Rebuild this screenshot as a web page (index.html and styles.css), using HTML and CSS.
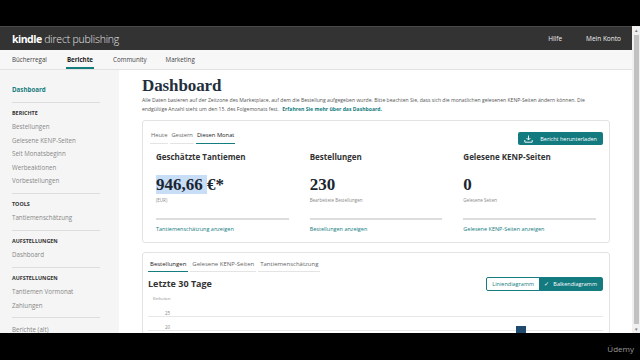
FILE: index.html
```html
<!DOCTYPE html>
<html>
<head>
    <title>Dashboard - Kindle Direct Publishing</title>
    <link rel="stylesheet" href="styles.css">
</head>
<body>
    <div class="bar-top"></div>

    <div class="frame">
        <div class="window">
            <div class="header">
                <div class="logo"><b>kindle</b> direct publishing</div>
                <div class="header-links">
                    <span>Hilfe</span>
                    <span>Mein Konto</span>
                </div>
            </div>

            <div class="nav">
                <span>Bücherregal</span>
                <span class="active">Berichte</span>
                <span>Community</span>
                <span>Marketing</span>
            </div>

            <div class="content">
                <div class="sidebar">
                    <div class="side-link current">Dashboard</div>
                    <div class="divider"></div>
                    <div class="side-title">BERICHTE</div>
                    <div class="side-link">Bestellungen</div>
                    <div class="side-link">Gelesene KENP-Seiten</div>
                    <div class="side-link">Seit Monatsbeginn</div>
                    <div class="side-link">Werbeaktionen</div>
                    <div class="side-link">Vorbestellungen</div>
                    <div class="divider"></div>
                    <div class="side-title">TOOLS</div>
                    <div class="side-link">Tantiemenschätzung</div>
                    <div class="divider"></div>
                    <div class="side-title">AUFSTELLUNGEN</div>
                    <div class="side-link">Dashboard</div>
                    <div class="divider"></div>
                    <div class="side-title">AUFSTELLUNGEN</div>
                    <div class="side-link">Tantiemen Vormonat</div>
                    <div class="side-link">Zahlungen</div>
                    <div class="divider"></div>
                    <div class="side-link">Berichte (alt)</div>
                </div>

                <div class="main">
                    <h1>Dashboard</h1>
                    <p class="intro">Alle Daten basieren auf der Zeitzone des Marketplace, auf dem die Bestellung aufgegeben wurde. Bitte beachten Sie, dass sich die monatlichen gelesenen KENP-Seiten ändern können. Die endgültige Anzahl steht um den 15. des Folgemonats fest. <a>Erfahren Sie mehr über das Dashboard.</a></p>

                    <div class="card">
                        <div class="card-top">
                            <div class="tabs">
                                <span>Heute</span>
                                <span>Gestern</span>
                                <span class="on">Diesen Monat</span>
                            </div>
                            <div class="download">
                                <svg width="9" height="8" viewBox="0 0 9 8">
                                    <path d="M4.5 0.5v4.5M2.5 3l2 2 2-2M0.8 5v2.2h7.4V5" fill="none" stroke="#fff" stroke-width="0.9"/>
                                </svg>
                                Bericht herunterladen
                            </div>
                        </div>
                        <div class="stats">
                            <div class="stat">
                                <div class="stat-title">Geschätzte Tantiemen</div>
                                <div class="stat-value"><span class="sel">946,66 </span>€*</div>
                                <div class="stat-note">(EUR)</div>
                                <div class="stat-line"></div>
                                <a class="stat-link">Tantiemenschätzung anzeigen</a>
                            </div>
                            <div class="stat">
                                <div class="stat-title">Bestellungen</div>
                                <div class="stat-value">230</div>
                                <div class="stat-note">Bearbeitete Bestellungen</div>
                                <div class="stat-line"></div>
                                <a class="stat-link">Bestellungen anzeigen</a>
                            </div>
                            <div class="stat">
                                <div class="stat-title">Gelesene KENP-Seiten</div>
                                <div class="stat-value">0</div>
                                <div class="stat-note">Gelesene Seiten</div>
                                <div class="stat-line"></div>
                                <a class="stat-link">Gelesene KENP-Seiten anzeigen</a>
                            </div>
                        </div>
                    </div>

                    <div class="card chart-card">
                        <div class="tabs tabs-big">
                            <span class="on">Bestellungen</span>
                            <span>Gelesene KENP-Seiten</span>
                            <span>Tantiemenschätzung</span>
                        </div>
                        <div class="chart-head">
                            <div class="chart-title">Letzte 30 Tage</div>
                            <div class="toggle">
                                <span>Liniendiagramm</span>
                                <span class="on">✓&nbsp;&nbsp;&nbsp;Balkendiagramm</span>
                            </div>
                        </div>
                        <div class="chart">
                            <div class="unit">Einheiten</div>
                            <div class="grid-row"><span>25</span></div>
                            <div class="grid-row"><span>20</span></div>
                            <div class="bar"></div>
                        </div>
                    </div>
                </div>
            </div>
        </div>
        <div class="scrollbar">
            <div class="arrow">▴</div>
            <div class="thumb"></div>
            <div class="arrow">▾</div>
        </div>
    </div>

    <div class="bar-bottom">Üdemy</div>
</body>
</html>
```

FILE: styles.css
```css
body {
    margin: 0;
    background: #000;
    font-family: "Open Sans", "Noto Sans", sans-serif;
    width: 640px;
    height: 360px;
    overflow: hidden;
}
a {
    color: #157c80;
}
.bar-top {
    height: 26px;
}
.frame {
    height: 307px;
    display: flex;
    overflow: hidden;
}
.window {
    width: 632px;
    display: flex;
    flex-direction: column;
    background: #fff;
}
.scrollbar {
    width: 8px;
    background: #f0f0f0;
    display: flex;
    flex-direction: column;
    align-items: center;
}
.scrollbar .arrow {
    font-size: 5px;
    line-height: 8px;
    color: #777;
}
.scrollbar .thumb {
    flex: 1;
    width: 5px;
    background: #c1c1c1;
    margin: 1px 0;
}
.bar-bottom {
    height: 27px;
    color: #9a9a9a;
    font-size: 8px;
    text-align: right;
    padding-right: 6px;
    line-height: 32px;
}

/* kopfzeile */
.header {
    height: 23px;
    background: #333;
    display: flex;
    align-items: center;
    justify-content: space-between;
    padding: 0 11px 0 12px;
    border-top: 1px solid #4a4a4a;
}
.logo {
    color: #e4e4e4;
    font-size: 10.5px;
    letter-spacing: -0.2px;
    font-weight: 300;
}
.logo b {
    color: #fff;
    font-weight: 700;
    letter-spacing: -0.5px;
}
.header-links {
    display: flex;
    gap: 24px;
    color: #eee;
    font-size: 6.5px;
}
.nav {
    height: 19px;
    background: #f7f7f7;
    border-bottom: 1px solid #e2e2e2;
    display: flex;
    gap: 19px;
    padding-left: 12px;
    font-size: 6.2px;
    color: #444;
}
.nav span {
    line-height: 19px;
    border-bottom: 2px solid transparent;
    height: 17px;
}
.nav .active {
    font-weight: 700;
    color: #222;
    border-bottom-color: #157c80;
    padding: 0 1px;
}

.content {
    flex: 1;
    display: flex;
    overflow: hidden;
}

/* seitenleiste */
.sidebar {
    width: 107px;
    background: #f5f5f5;
    padding: 13px 0 0 12px;
    flex-shrink: 0;
}
.side-link {
    font-size: 6.2px;
    color: #888;
    line-height: 13.5px;
}
.side-link.current {
    color: #157c80;
    font-weight: 700;
}
.side-title {
    font-size: 5.4px;
    font-weight: 700;
    color: #333;
    line-height: 11px;
    margin-bottom: 1.5px;
}
.divider {
    width: 88px;
    height: 1px;
    background: #ddd;
    margin: 5px 0 5px;
}

/* hauptbereich */
.main {
    flex: 1;
    padding: 6px 22px 0 23px;
}
h1 {
    font-family: "Liberation Serif", "DejaVu Serif", serif;
    font-size: 17px;
    font-weight: 700;
    color: #232f3e;
    margin: 0;
    line-height: 20px;
    letter-spacing: -0.1px;
}
.intro {
    font-size: 5.1px;
    color: #555;
    line-height: 9.2px;
    margin: 0 0 6px;
}
.intro a {
    font-weight: 700;
    margin-left: 2px;
}

.card {
    border: 1px solid #e3e3e3;
    border-radius: 3px;
    background: #fff;
}
.card-top {
    display: flex;
    justify-content: space-between;
    align-items: flex-start;
    padding: 10px 6px 0 7px;
}
.tabs {
    display: flex;
    gap: 2px;
    font-size: 5.8px;
    color: #666;
}
.tabs span {
    border-bottom: 1.5px solid #e4e4e4;
    padding: 0 1px 4px;
    line-height: 8px;
}
.tabs .on {
    color: #222;
    border-bottom-color: #157c80;
}
.download {
    background: #137a7f;
    color: #fff;
    font-size: 5.5px;
    height: 13px;
    padding: 0 6px;
    display: flex;
    align-items: center;
    gap: 7px;
    border-radius: 2px;
    margin-top: 1px;
}
.stats {
    display: flex;
    gap: 21px;
    padding: 6px 13px 9px 13px;
}
.stat {
    flex: 1;
}
.stat-title {
    font-size: 8px;
    font-weight: 700;
    color: #333;
    line-height: 11px;
}
.stat-value {
    font-family: "Liberation Serif", "DejaVu Serif", serif;
    font-weight: 700;
    font-size: 17px;
    color: #1b2631;
    margin-top: 11.5px;
    line-height: 22px;
}
.sel {
    background: #c8def6;
}
.stat-note {
    font-size: 4.5px;
    color: #888;
    line-height: 7px;
    margin-top: 1.5px;
}
.stat-line {
    height: 2px;
    background: #ddd;
    margin: 14px 0 5px;
}
.stat-link {
    font-size: 5.5px;
    display: block;
    line-height: 8px;
}

.chart-card {
    margin-top: 9px;
    padding: 7px 6px 0 5px;
    height: 120px;
}
.tabs-big {
    font-size: 6px;
}
.tabs-big span {
    padding: 0 2px 3px;
    line-height: 8px;
}
.chart-head {
    display: flex;
    justify-content: space-between;
    align-items: center;
    margin-top: 4.5px;
}
.chart-title {
    font-size: 9px;
    font-weight: 700;
    color: #333;
}
.toggle {
    display: flex;
    border: 1px solid #157c80;
    border-radius: 2px;
    font-size: 5.5px;
    height: 12px;
}
.toggle span {
    line-height: 12px;
    padding: 0 5px;
    color: #157c80;
}
.toggle .on {
    background: #137a7f;
    color: #fff;
}
.chart {
    position: relative;
    margin-top: 4px;
}
.unit {
    font-size: 4px;
    color: #888;
    padding-left: 5px;
    line-height: 8px;
}
.grid-row {
    height: 14px;
    border-bottom: 1px solid #e8e8e8;
    font-size: 4.5px;
    color: #888;
    padding-left: 17px;
    box-sizing: border-box;
}
.grid-row span {
    display: block;
    line-height: 8px;
    padding-top: 6px;
}
.bar {
    position: absolute;
    left: 368px;
    top: 31px;
    width: 10px;
    height: 20px;
    background: #1f4a6e;
}
```
